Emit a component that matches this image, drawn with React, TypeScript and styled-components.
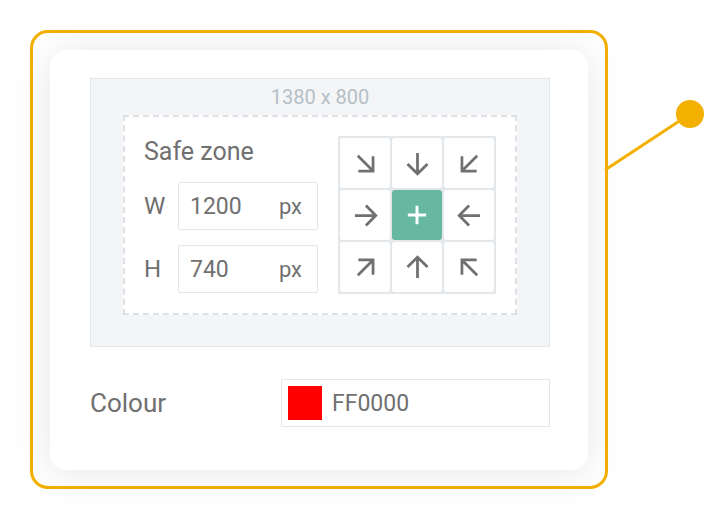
import styled, { createGlobalStyle } from 'styled-components';

const GlobalStyle = createGlobalStyle`
  body {
    margin: 0;
    background: #ffffff;
    font-family: Roboto, "Liberation Sans", sans-serif;
  }
`;

type Cell = { kind: 'straight' | 'diag' | 'center'; rot: number };

const cells: Cell[] = [
  { kind: 'diag', rot: 0 },
  { kind: 'straight', rot: 0 },
  { kind: 'diag', rot: 90 },
  { kind: 'straight', rot: -90 },
  { kind: 'center', rot: 0 },
  { kind: 'straight', rot: 90 },
  { kind: 'diag', rot: -90 },
  { kind: 'straight', rot: 180 },
  { kind: 'diag', rot: 180 },
];

const paths = {
  straight: 'M12 4.3V19.5M4.7 12.3L12 19.5L19.3 12.3',
  diag: 'M6.4 6.4L17.5 17.5M17.5 6.8V17.5H6.8',
};

function Arrow({ kind, rot }: { kind: 'straight' | 'diag'; rot: number }) {
  return (
    <ArrowSvg viewBox="0 0 24 24" $rot={rot}>
      <path d={paths[kind]} />
    </ArrowSvg>
  );
}

function App() {
  return (
    <Page>
      <GlobalStyle />
      <Frame>
        <Pin viewBox="0 0 104 90">
          <line x1="2" y1="77" x2="87" y2="21" />
          <circle cx="87" cy="21" r="14" />
        </Pin>
        <Card>
          <Canvas>
            <CanvasSize>1380 x 800</CanvasSize>
            <SafeZone>
              <Fields>
                <Title>Safe zone</Title>
                <FieldRow>
                  <FieldLabel>W</FieldLabel>
                  <NumberBox>
                    <span>1200</span>
                    <Unit>px</Unit>
                  </NumberBox>
                </FieldRow>
                <FieldRow>
                  <FieldLabel>H</FieldLabel>
                  <NumberBox>
                    <span>740</span>
                    <Unit>px</Unit>
                  </NumberBox>
                </FieldRow>
              </Fields>
              <AnchorGrid>
                {cells.map((c, i) =>
                  c.kind === 'center' ? (
                    <AnchorCell key={i} $active>
                      <PlusSvg viewBox="0 0 24 24">
                        <path d="M12 2V22M2 12H22" />
                      </PlusSvg>
                    </AnchorCell>
                  ) : (
                    <AnchorCell key={i}>
                      <Arrow kind={c.kind} rot={c.rot} />
                    </AnchorCell>
                  )
                )}
              </AnchorGrid>
            </SafeZone>
          </Canvas>
          <ColourRow>
            <RowLabel>Colour</RowLabel>
            <ColourBox>
              <Swatch $color="#ff0000" />
              <span>FF0000</span>
            </ColourBox>
          </ColourRow>
        </Card>
      </Frame>
    </Page>
  );
}

export default App;

const Page = styled.div`
  padding: 30px;
`;

const Frame = styled.div`
  position: relative;
  width: 578px;
  box-sizing: border-box;
  border: 3px solid #f4b000;
  border-radius: 18px;
  padding: 17px 17px 16px;
`;

const Pin = styled.svg`
  position: absolute;
  left: calc(100% - 2px);
  top: 60px;
  width: 104px;
  height: 90px;
  overflow: visible;
  line {
    stroke: #f4b000;
    stroke-width: 3;
  }
  circle {
    fill: #f4b000;
  }
`;

const Card = styled.div`
  background: #ffffff;
  border-radius: 16px;
  box-shadow: 0 2px 40px rgba(0, 0, 0, 0.1);
  padding: 28px 38px 43px 40px;
`;

const Canvas = styled.div`
  background: #f4f5f7;
  border: 1px solid #e3e6ea;
  padding: 0 32px 31px;
`;

const CanvasSize = styled.div`
  height: 36px;
  line-height: 37px;
  text-align: center;
  font-size: 20px;
  color: #b3c0c8;
`;

const SafeZone = styled.div`
  background: #ffffff;
  border: 2px dashed #dde0e4;
  padding: 19px;
  display: flex;
  gap: 20px;
`;

const Fields = styled.div`
  flex: 1;
  display: flex;
  flex-direction: column;
  gap: 15px;
`;

const Title = styled.div`
  font-size: 25px;
  line-height: 31px;
  color: #707070;
`;

const FieldRow = styled.div`
  display: flex;
  align-items: center;
`;

const FieldLabel = styled.span`
  width: 34px;
  font-size: 24px;
  color: #707070;
`;

const NumberBox = styled.div`
  width: 140px;
  height: 48px;
  box-sizing: border-box;
  border: 1px solid #e3e6ea;
  border-radius: 2px;
  display: flex;
  align-items: center;
  justify-content: space-between;
  padding: 0 15px 0 11px;
  font-size: 23px;
  color: #707070;
`;

const Unit = styled.span`
  font-size: 22px;
`;

const AnchorGrid = styled.div`
  display: grid;
  grid-template-columns: repeat(3, 50px);
  grid-template-rows: repeat(3, 50px);
  gap: 2px;
  padding: 2px;
  background: #e5e8eb;
`;

const AnchorCell = styled.div<{ $active?: boolean }>`
  display: flex;
  align-items: center;
  justify-content: center;
  border-radius: 3px;
  background: ${(p) => (p.$active ? '#66b8a0' : '#ffffff')};
`;

const ArrowSvg = styled.svg<{ $rot: number }>`
  width: 33px;
  height: 33px;
  transform: rotate(${(p) => p.$rot}deg);
  path {
    fill: none;
    stroke: #707070;
    stroke-width: 2;
  }
`;

const PlusSvg = styled.svg`
  width: 22px;
  height: 22px;
  path {
    fill: none;
    stroke: #ffffff;
    stroke-width: 3.2;
  }
`;

const ColourRow = styled.div`
  margin-top: 32px;
  display: flex;
  align-items: center;
  justify-content: space-between;
`;

const RowLabel = styled.span`
  font-size: 26px;
  color: #707070;
`;

const ColourBox = styled.div`
  width: 269px;
  height: 48px;
  box-sizing: border-box;
  border: 1px solid #e3e6ea;
  display: flex;
  align-items: center;
  gap: 10px;
  padding: 0 6px;
  font-size: 23px;
  color: #707070;
`;

const Swatch = styled.div<{ $color: string }>`
  width: 34px;
  height: 34px;
  background: ${(p) => p.$color};
`;
